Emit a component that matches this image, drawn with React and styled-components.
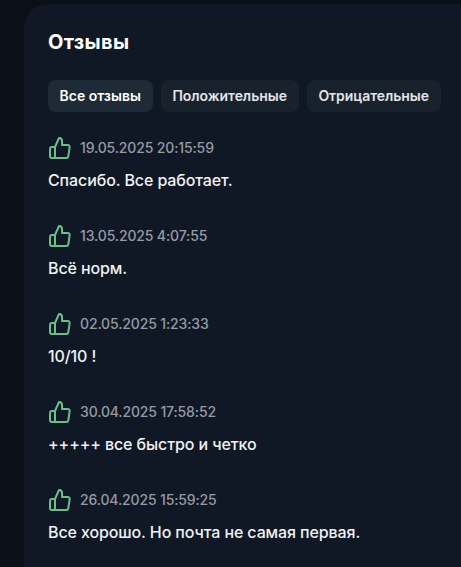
import React from 'react';
import styled, { createGlobalStyle } from 'styled-components';

const GlobalStyle = createGlobalStyle`
  * { box-sizing: border-box; }
  body { margin: 0; background: #0b1018; overflow: hidden; }
`;

const Page = styled.main`
  height: 567px;
  padding: 4px 0 0 24px;
  overflow: hidden;
  background: #0b1018;
  font-family: Inter, sans-serif;
`;

const Panel = styled.section`
  width: 520px;
  height: 640px;
  padding: 24px;
  border-radius: 24px;
  background: #111825;
`;

const Title = styled.h1`
  margin: 0;
  color: #fff;
  font-size: 20px;
  font-weight: 700;
  line-height: 28px;
  letter-spacing: 0.35px;
`;

const Tabs = styled.div`
  display: flex;
  gap: 8px;
  margin-top: 24px;
`;

const Tab = styled.button`
  height: 32px;
  padding: 0 12px 0 11.5px;
  border: 0;
  border-radius: 8px;
  background: ${({ $active }) => ($active ? '#1e2a35' : '#18222d')};
  color: ${({ $active }) => ($active ? '#fff' : '#e2e4e8')};
  font: 600 14px/20px Inter, sans-serif;
  letter-spacing: ${({ $active }) => ($active ? '0' : '-0.05px')};
  white-space: nowrap;
`;

const List = styled.div`
  display: flex;
  flex-direction: column;
  gap: 32px;
  margin-top: 24px;
`;

const Review = styled.article`
  height: 56px;
`;

const Meta = styled.div`
  display: flex;
  align-items: center;
  gap: 8px;
  height: 24px;
  color: #959ba5;
  font-size: 14px;
  font-weight: 500;
  line-height: 20px;
  letter-spacing: -0.14px;
`;

const Comment = styled.p`
  margin: 8px 0 0;
  color: #f0f1f3;
  font-size: 16px;
  font-weight: 500;
  line-height: 24px;
  letter-spacing: -0.11px;
`;

const LikeIcon = styled.svg`
  width: 24px;
  height: 24px;
  fill: none;
  stroke: #68c08b;
  stroke-width: 2;
  stroke-linecap: round;
  stroke-linejoin: round;
`;

const filters = ['Все отзывы', 'Положительные', 'Отрицательные'];

const reviews = [
  ['19.05.2025 20:15:59', 'Спасибо. Все работает.'],
  ['13.05.2025 4:07:55', 'Всё норм.'],
  ['02.05.2025 1:23:33', '10/10 !'],
  ['30.04.2025 17:58:52', '+++++ все быстро и четко'],
  ['26.04.2025 15:59:25', 'Все хорошо. Но почта не самая первая.'],
];

export default function App() {
  return (
    <Page>
      <GlobalStyle />
      <Panel>
        <Title>Отзывы</Title>
        <Tabs>
          {filters.map((label, i) => (
            <Tab key={label} $active={i === 0}>{label}</Tab>
          ))}
        </Tabs>
        <List>
          {reviews.map(([date, text]) => (
            <Review key={date}>
              <Meta>
                <LikeIcon viewBox="0 0 24 24">
                  <path d="M7 22H4a2 2 0 0 1-2-2v-7a2 2 0 0 1 2-2h3m7-2V5a3 3 0 0 0-3-3l-4 9v11h11.28a2 2 0 0 0 2-1.7l1.38-9a2 2 0 0 0-2-2.3z" />
                </LikeIcon>
                <span>{date}</span>
              </Meta>
              <Comment>{text}</Comment>
            </Review>
          ))}
        </List>
      </Panel>
    </Page>
  );
}
